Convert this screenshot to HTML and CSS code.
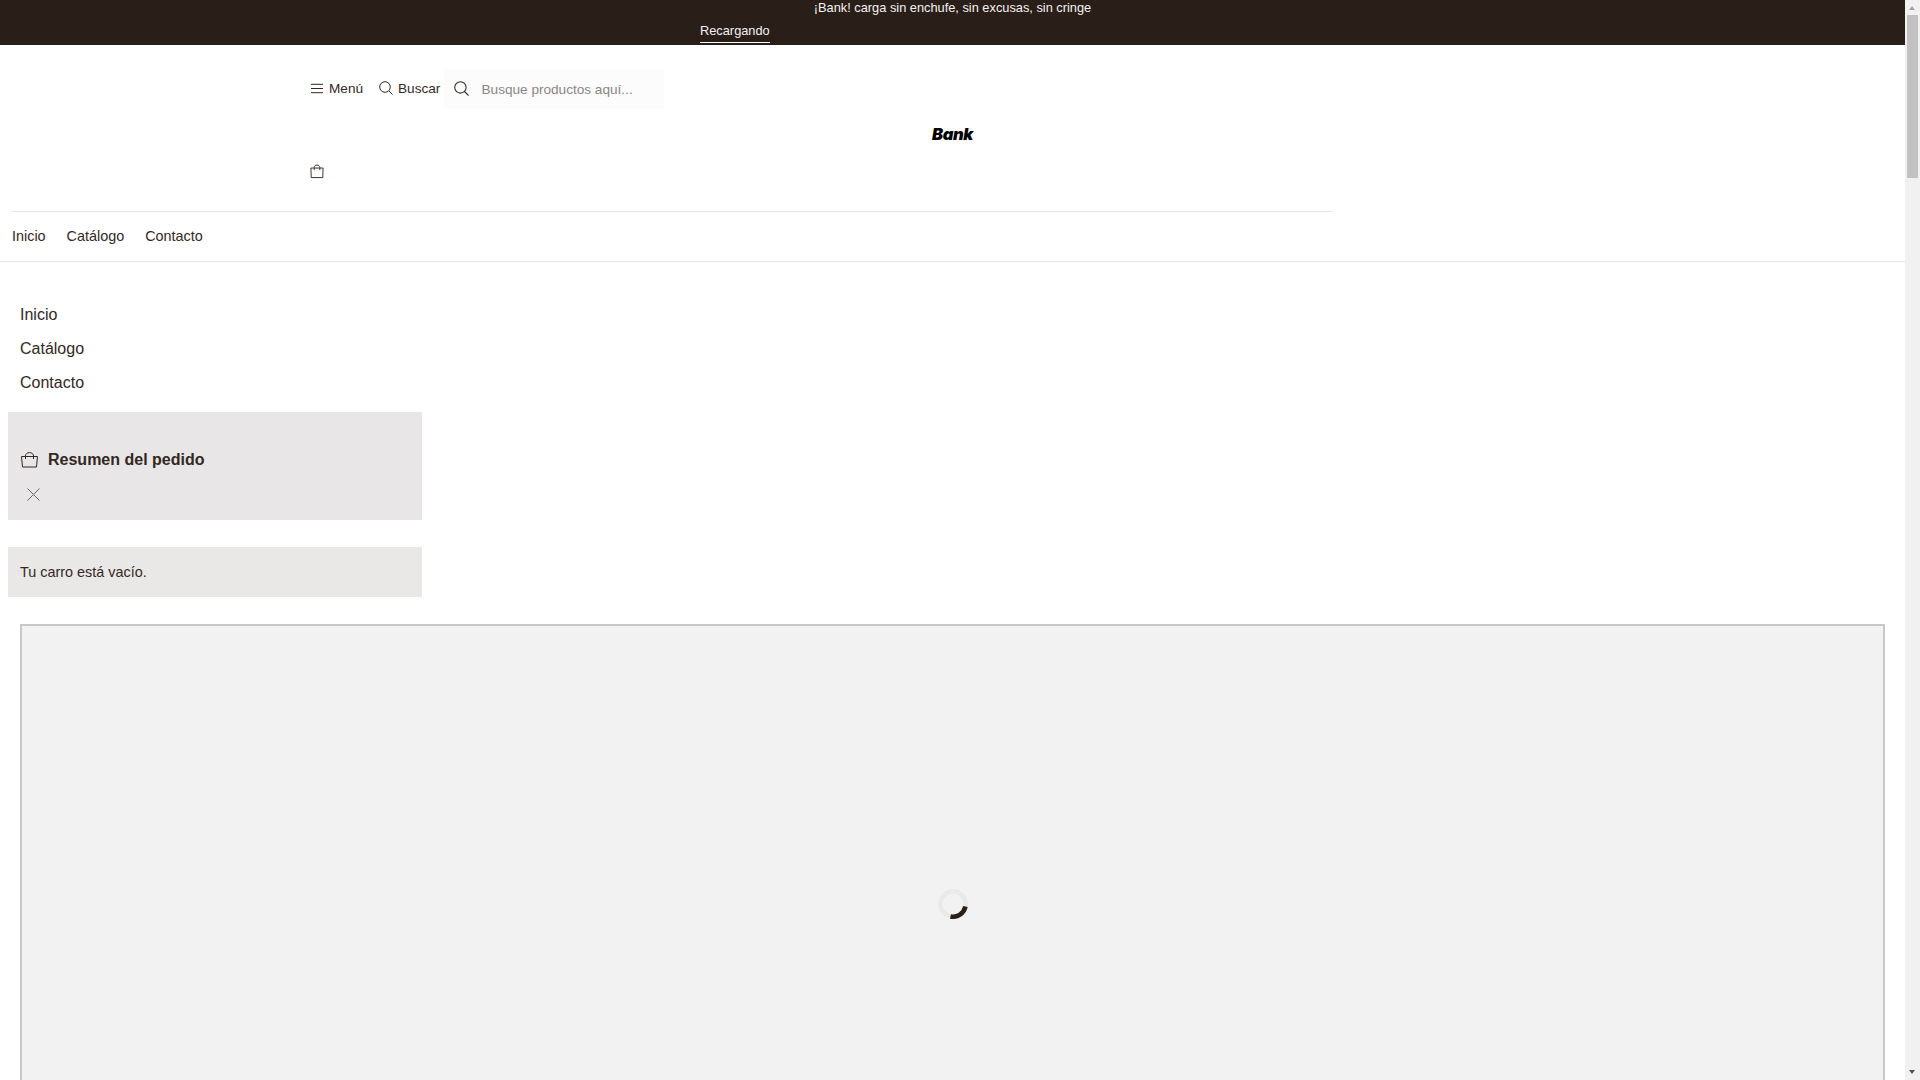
FILE: index.html
```html
<!DOCTYPE html>
<html lang="es">
<head>
<meta charset="utf-8">
<title>Bank</title>
<link rel="stylesheet" href="styles.css">
</head>
<body>
<div class="announce">
  <p class="announce-text">¡Bank! carga sin enchufe, sin excusas, sin cringe</p>
  <div class="announce-link-row"><a class="announce-link" href="#">Recargando</a></div>
</div>
<header class="site-header">
  <div class="header-inner">
    <div class="header-main">
      <div class="tools-row">
        <button class="tool-btn" type="button">
          <svg class="ico" viewBox="0 0 14 14"><path d="M1 3.300h12M1 7.500h12M1 11.700h12"/></svg>
          <span>Menú</span>
        </button>
        <button class="tool-btn" type="button">
          <svg class="ico" viewBox="0 0 14 14"><circle cx="6" cy="6" r="5.300"/><path d="M9.800 9.800 13.600 13.600"/></svg>
          <span>Buscar</span>
        </button>
        <div class="search">
          <svg class="ico search-ico" viewBox="0 0 14 14"><circle cx="6" cy="6" r="5.300"/><path d="M9.800 9.800 13.600 13.600"/></svg>
          <span class="search-ph">Busque productos aquí...</span>
        </div>
      </div>
      <div class="logo-row"><span class="logo">Bank</span></div>
      <div class="cart-row">
        <svg class="ico bag" viewBox="0 0 15 15"><path d="M1 3.800h13l-.3 10.200H1.300zM4.500 6V3.200C4.500 1.500 5.700.6 7.500.6s3 .9 3 2.600V6"/></svg>
      </div>
    </div>
    <nav class="top-nav">
      <a href="#">Inicio</a>
      <a href="#">Catálogo</a>
      <a href="#">Contacto</a>
    </nav>
  </div>
</header>
<main class="content">
  <nav class="side-nav">
    <a href="#">Inicio</a>
    <a href="#">Catálogo</a>
    <a href="#">Contacto</a>
  </nav>
  <section class="summary">
    <h2 class="summary-title">
      <svg class="ico summary-bag" viewBox="0 0 17 16"><path d="M.5 4.500h16l-1 10.500h-14zM4.500 7V4C4.500 2 6 .6 8.500 .6S12.500 2 12.500 4v3"/></svg>
      <span>Resumen del pedido</span>
    </h2>
    <svg class="close" viewBox="0 0 13 13"><path d="M.5.5l12 12M12.500.5l-12 12"/></svg>
  </section>
  <div class="empty">Tu carro está vacío.</div>
  <div class="frame">
    <svg class="spinner" viewBox="0 0 30 30">
      <circle class="track" cx="15" cy="15" r="12.700"/>
      <path class="arc" d="M27.400 17.500A12.700 12.700 0 0 1 12.500 27.500"/>
    </svg>
  </div>
</main>
<aside class="scrollbar" aria-hidden="true">
  <span class="arrow arrow-up"></span>
  <span class="thumb"></span>
  <span class="arrow arrow-down"></span>
</aside>
</body>
</html>
```
FILE: styles.css
```css
* { box-sizing: border-box; }
html, body { margin: 0; padding: 0; }
body {
  width: 1905px;
  font-family: "Liberation Sans", Arial, sans-serif;
  color: #33281f;
  background: #fff;
}
a { color: inherit; text-decoration: none; }

.announce {
  height: 45px;
  background: #2a1e19;
  color: #f4f2f1;
  font-size: 12.8px;
}
.announce-text { margin: 0; height: 15px; line-height: 15px; text-align: center; }
.announce-link-row { padding: 8px 0 0 700px; }
.announce-link {
  display: inline-block;
  height: 20px;
  line-height: 16px;
  border-bottom: 1px solid #fff;
}

.site-header { height: 217px; border-bottom: 1px solid #e6e6e6; }
.header-inner { width: 1320px; margin-left: 12px; }
.header-main { height: 167px; padding: 24px 0 0 298px; border-bottom: 1px solid #e6e6e6; }

.tools-row { display: flex; align-items: center; height: 40px; }
.tool-btn {
  display: flex;
  align-items: center;
  gap: 5px;
  padding: 0;
  border: 0;
  background: none;
  color: inherit;
  font: 13.6px "Liberation Sans", Arial, sans-serif;
  margin: -2px 16px 0 0;
}
.tool-btn + .tool-btn { margin-right: 3.7px; }
.ico { fill: none; stroke: currentColor; stroke-width: 1; display: block; }
.tool-btn .ico { width: 14px; height: 14px; }
.search {
  display: flex;
  align-items: center;
  width: 220px;
  height: 40px;
  background: #fcfcfc;
  padding-left: 10px;
}
.search-ico { width: 15px; height: 15px; margin: -2px 12.500px 0 0; }
.search-ph { color: #8a8583; font-size: 13.6px; }

.logo-row { width: 1285px; height: 50px; padding-top: 15px; text-align: center; }
.logo { font: italic 900 16.5px/20px Inter, "Liberation Sans", sans-serif; color: #000; letter-spacing: -.4px; }
.cart-row { padding-top: 5px; }
.bag { width: 14px; height: 15px; margin-left: -.5px; }

.top-nav { display: flex; gap: 21px; height: 48px; align-items: center; font-size: 14.4px; }

.content { padding: 0 20px 0 8px; }
.side-nav { display: flex; flex-direction: column; padding: 36px 0 12px 12px; font-size: 16px; }
.side-nav a { height: 34px; line-height: 34px; }

.summary {
  width: 414px;
  height: 108px;
  background: #e8e6e6;
  padding: 36px 0 0 13px;
}
.summary-title {
  display: flex;
  align-items: center;
  gap: 10px;
  margin: 0;
  height: 24px;
  font-size: 16px;
  font-weight: 700;
}
.summary-bag { width: 17px; height: 16px; }
.close { display: block; width: 13px; height: 13px; margin: 16px 0 0 6px; fill: none; stroke: #666; stroke-width: 1; }

.empty {
  width: 414px;
  height: 50px;
  line-height: 50px;
  margin-top: 27px;
  padding-left: 12px;
  background: #eae8e6;
  font-size: 14.4px;
}

.frame {
  display: flex;
  justify-content: center;
  margin: 27px 0 0 12px;
  height: 6300px;
  border: 2px solid #c8c8c8;
  background: #f2f2f2;
  padding-top: 263px;
}
.spinner { width: 30px; height: 30px; fill: none; stroke-width: 4.600; }
.track { stroke: #e9e9e9; }
.arc { stroke: #2a1e19; }

.scrollbar {
  position: fixed;
  top: 0;
  right: 0;
  width: 15px;
  height: 1080px;
  background: #f1f1f1;
}
.thumb {
  position: absolute;
  top: 15px;
  left: 2px;
  width: 11px;
  height: 163px;
  background: #c1c1c1;
}
.arrow {
  position: absolute;
  left: 4px;
  width: 0;
  height: 0;
  border-left: 3.5px solid transparent;
  border-right: 3.5px solid transparent;
}
.arrow-up { top: 6px; border-bottom: 4px solid #a3a3a3; }
.arrow-down { bottom: 6px; border-top: 4px solid #505050; }
```
